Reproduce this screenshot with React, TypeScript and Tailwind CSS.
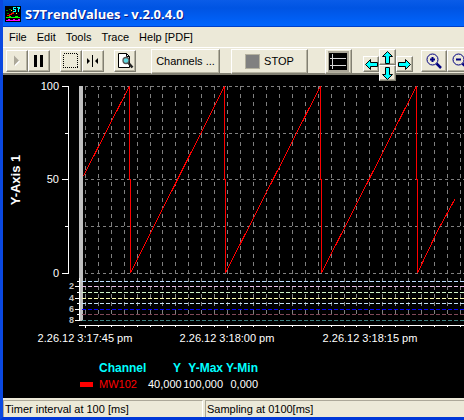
import type { ReactNode } from "react";

const MENU = ["File", "Edit", "Tools", "Trace", "Help [PDF]"];

const RAISED =
  "flex shrink-0 items-center justify-center border border-t-white border-l-white border-r-[#817f72] border-b-[#817f72] bg-[#ece9d8] shadow-[inset_-1px_-1px_0_#b5b2a0]";

function ToolButton({ label, className, children }: { label: string; className: string; children: ReactNode }) {
  return (
    <button type="button" aria-label={label} className={`${RAISED} ${className}`}>
      {children}
    </button>
  );
}

function Arrow({ turn }: { turn: number }) {
  return (
    <svg width="13" height="13" viewBox="0 0 13 13" className="shrink-0">
      <path
        d="M0.5 6.5 L5.5 1.5 V4.500 H12.500 V8.500 H5.500 V11.500 Z"
        transform={`rotate(${turn} 6.5 6.5)`}
        fill="#00ffff"
        stroke="#000"
        strokeWidth="1"
      />
    </svg>
  );
}

function Magnifier({ plus }: { plus: boolean }) {
  return (
    <svg width="18" height="18" viewBox="0 0 18 18" fill="none" stroke="#000080" className="shrink-0">
      <circle cx="7.5" cy="7.5" r="5.5" strokeWidth="1" />
      <path d="M5 7.5h5" strokeWidth="2" />
      {plus && <path d="M7.5 5v5" strokeWidth="2" />}
      <path d="M11.5 11.5l4.500 4.500" strokeWidth="2.5" />
    </svg>
  );
}

function TitleBar() {
  return (
    <header className="flex h-[27px] items-center gap-1 bg-linear-to-b from-[#0a5ce8] via-[#0054e3] via-30% to-[#0066ff] pl-[2px] shadow-[inset_0_-1px_0_#0040c8]">
      <svg width="16" height="16" viewBox="0 0 16 16" shapeRendering="crispEdges" className="shrink-0">
        <rect width="16" height="16" fill="#000" />
        <path d="M1 4h2v1H1zM4 3h2v1H4zM2 7h2v1H2zM7 6h1v2H7z" fill="#008000" />
        <path d="M2 9h2v-1h2v-1h2v-2h1v3H7v1H5v1H2z" fill="#f00" />
        <path d="M8 1h3v1H9v1h2v3H8V5h2V4H8zM12 1h3v2h-1v3h-1V2h-1z" fill="#0ff" />
        <path d="M6 4h1v1H6zM11 7h1v1h-1z" fill="#ff0" />
        <path d="M1 11h3v-1h2v1h4v-1h3v1h2v1H1z" fill="#0f0" />
        <path d="M1 14h2v-1h2v1h3v-1h2v1h3v-1h2v2H1z" fill="#f0f" />
      </svg>
      <h1 className="font-['Open_Sans','Noto_Sans',sans-serif] text-[13px] leading-4 font-bold whitespace-nowrap text-white [text-shadow:1px_1px_0_#0a1883]">
        S7TrendValues - v.2.0.4.0
      </h1>
    </header>
  );
}

function Toolbar() {
  return (
    <div className="relative z-10 flex h-[28px] shrink-0 items-start border-t border-b-2 border-t-white border-b-[#817f72] bg-[#ece9d8] pt-px">
      <div className="mt-px flex pl-[3px]">
        <ToolButton label="Start" className="size-[22px]">
          <svg width="16" height="16" viewBox="0 0 16 16">
            <path d="M6 3.5v10l5-5z" fill="#fff" />
            <path d="M5 2.5v10l5-5z" fill="#aca899" />
          </svg>
        </ToolButton>
        <ToolButton label="Pause" className="size-[22px]">
          <svg width="16" height="16" viewBox="0 0 16 16">
            <path d="M3 2h3v12H3zM9 2h3v12H9z" />
          </svg>
        </ToolButton>
      </div>
      <div className="mt-px ml-[10px] flex">
        <ToolButton label="Select area" className="size-[22px]">
          <svg width="16" height="16" viewBox="0 0 16 16" shapeRendering="crispEdges">
            <rect x="0.5" y="0.5" width="14" height="14" fill="none" stroke="#000" strokeDasharray="1 1" />
          </svg>
        </ToolButton>
        <ToolButton label="Cursor" className="size-[22px]">
          <svg width="16" height="16" viewBox="0 0 16 16">
            <path d="M7 2h1v12H7zM2 5v6l3-3zM13 5v6l-3-3z" />
          </svg>
        </ToolButton>
      </div>
      <ToolButton label="Preview" className="mt-px ml-[10px] size-[22px]">
        <svg width="18" height="18" viewBox="0 0 18 18" className="shrink-0">
          <path d="M2.5 1.5h8l3 3v11h-11z" fill="#fff" stroke="#000" />
          <path d="M10.5 1.5v3h3" fill="none" stroke="#000" />
          <circle cx="10" cy="8.5" r="3" fill="#5fd8e0" stroke="#555" strokeWidth="1.3" />
          <path d="M12.5 11l4 4.5" stroke="#222" strokeWidth="2.5" />
        </svg>
      </ToolButton>
      <button type="button" className={`${RAISED} ml-[15px] h-[25px] w-[69px] text-[11px]`}>
        Channels ...
      </button>
      <button type="button" className={`${RAISED} ml-[11px] h-[25px] w-[77px] gap-1 text-[11px]`}>
        <span className="size-[15px] border border-[#b5b2a0] bg-[#808080]" />
        STOP
      </button>
      <ToolButton label="Axis view" className="ml-[17px] h-[25px] w-[27px]">
        <svg width="21" height="21" viewBox="0 0 21 21" shapeRendering="crispEdges" className="shrink-0">
          <rect width="21" height="21" fill="#aca899" />
          <rect x="1" y="2" width="18" height="17" fill="#000" />
          <path d="M4.5 3v15M2 7.5h16M2 14.5h16" fill="none" stroke="#d8d8d8" />
        </svg>
      </ToolButton>
      <div className="ml-[11px] flex items-start">
        <ToolButton label="Move left" className="mt-[7px] size-4">
          <Arrow turn={0} />
        </ToolButton>
        <div className="flex flex-col">
          <ToolButton label="Move up" className="h-4 w-[17px]">
            <Arrow turn={90} />
          </ToolButton>
          <ToolButton label="Move down" className="h-4 w-[17px]">
            <Arrow turn={270} />
          </ToolButton>
        </div>
        <ToolButton label="Move right" className="mt-[7px] h-4 w-[17px]">
          <Arrow turn={180} />
        </ToolButton>
      </div>
      <div className="mt-px ml-2 flex h-[22px] min-w-0 flex-1 overflow-hidden">
        <ToolButton label="Zoom in" className="h-[22px] w-[26px]">
          <Magnifier plus />
        </ToolButton>
        <ToolButton label="Zoom out" className="h-[22px] w-[26px]">
          <Magnifier plus={false} />
        </ToolButton>
      </div>
    </div>
  );
}

const GRID_X = Array.from({ length: 120 }, (_, i) => Math.floor(82.4 + i * 12.93) + 0.5);
const GRID_Y = [11.5, 58.5, 104.5, 151.5, 198.5];
const CHANNELS = [
  { y: 206.5, color: "#bcdcff" },
  { y: 211.5, color: "#e8c0e8" },
  { y: 217.5, color: "#d0f4c8" },
  { y: 223.5, color: "#ffffb0" },
  { y: 228.5, color: "#c4e0f8" },
  { y: 234.5, color: "#0000ff" },
  { y: 239.5, color: "#804858" },
  { y: 245.5, color: "#408080" },
];
const DATES = [
  { x: 82, text: "2.26.12 3:17:45 pm" },
  { x: 224, text: "2.26.12 3:18:00 pm" },
  { x: 367, text: "2.26.12 3:18:15 pm" },
];
const TRACE =
  "M80.5 101 L126.5 11 V104.5 H127.5 V198 L221.5 11 V104.5 H222.5 V198 L317.5 11 V104.5 H318.5 V198 L413.5 11 V104.5 H414.5 V198 L435 155 L452 124";

function TrendChart() {
  return (
    <svg width="100%" height="282" className="block shrink-0" shapeRendering="crispEdges" role="img" aria-label="Trend of MW102">
      <g stroke="#808080" fill="none">
        {GRID_X.map((x) => (
          <line key={x} x1={x} x2={x} y1="11" y2="242" strokeDasharray="4 4" />
        ))}
        {GRID_Y.map((y) => (
          <line key={y} x1="82" x2="100%" y1={y} y2={y} strokeDasharray="3 3" />
        ))}
      </g>
      <rect x="76" y="11" width="4" height="235" fill="#c0c0c0" />
      {CHANNELS.map(({ y, color }) => (
        <line key={y} x1="79" x2="100%" y1={y} y2={y} stroke={color} strokeDasharray="4 2" />
      ))}
      <g stroke="#fff" fill="none">
        <path d="M59 11.5H65.5V198.5H59M59 104.5H65M62 58.5H65M62 151.5H65" />
        <path d="M76.5 203V246" />
        {CHANNELS.map(({ y }, i) => (
          <line key={y} x1={i % 2 ? 72 : 74} x2="77" y1={y} y2={y} />
        ))}
        <line x1="76" x2="100%" y1="250.5" y2="250.5" />
        {GRID_X.map((x, i) => (
          <line key={x} x1={x} x2={x} y1="251" y2={i % 11 ? 252 : 253} />
        ))}
      </g>
      <path d={TRACE} fill="none" stroke="#f00" />
      <g fill="#fff" fontSize="11" textAnchor="end">
        <text x="56" y="15">100</text>
        <text x="56" y="108">50</text>
        <text x="56" y="202">0</text>
      </g>
      <g fill="#c0c0c0" fontSize="9" fontWeight="bold" textAnchor="end">
        <text x="71" y="214">2</text>
        <text x="71" y="226">4</text>
        <text x="71" y="237">6</text>
        <text x="71" y="248">8</text>
      </g>
      <g fill="#fff" fontSize="11" textAnchor="middle">
        {DATES.map(({ x, text }) => (
          <text key={text} x={x} y="267">{text}</text>
        ))}
      </g>
      <text transform="translate(17 105) rotate(-90)" fill="#fff" fontSize="13" fontWeight="bold" textAnchor="middle">
        Y-Axis 1
      </text>
    </svg>
  );
}

function Legend() {
  return (
    <table className="ml-[77px] w-[178px] table-fixed border-collapse text-right text-[11px] leading-4 whitespace-nowrap text-white">
      <colgroup>
        <col className="w-[19px]" />
        <col className="w-[49px]" />
        <col className="w-[33px]" />
        <col className="w-[42px]" />
        <col className="w-[35px]" />
      </colgroup>
      <thead>
        <tr className="text-[12px] text-[#00ffff]">
          <td />
          <th scope="col" className="p-0 text-left">Channel</th>
          <th scope="col" className="p-0">Y</th>
          <th scope="col" className="p-0">Y-Max</th>
          <th scope="col" className="p-0">Y-Min</th>
        </tr>
      </thead>
      <tbody>
        <tr>
          <td className="p-0">
            <div className="h-[5px] w-[13px] bg-[#f00]" />
          </td>
          <td className="p-0 text-left text-[#f00]">MW102</td>
          <td className="p-0">40,000</td>
          <td className="p-0">100,000</td>
          <td className="p-0">0,000</td>
        </tr>
      </tbody>
    </table>
  );
}

export default function App() {
  return (
    <div className="flex min-h-screen flex-col overflow-hidden border-b-[3px] border-l-[3px] border-b-[#0038d8] border-l-[#0a48e0] bg-[#ece9d8] font-['Liberation_Sans',Arial,sans-serif] text-[11px] text-black">
      <TitleBar />
      <nav className="flex h-5 items-center gap-[10px] bg-[#ece9d8] pl-[6px]">
        {MENU.map((item) => (
          <button key={item} type="button" className="text-[11px] leading-4">
            {item}
          </button>
        ))}
      </nav>
      <Toolbar />
      <main className="flex-1 bg-black pb-1">
        <TrendChart />
        <div className="pt-[3px]">
          <Legend />
        </div>
      </main>
      <footer className="flex h-[19px] shrink-0 gap-[2px] pt-[2px] text-[11px] leading-4">
        <div className="w-[200px] border-t border-r border-l border-t-[#aca899] border-r-white border-l-[#aca899] pl-px whitespace-nowrap">
          Timer interval at 100 [ms]
        </div>
        <div className="flex-1 border-t border-l border-[#aca899] pl-px whitespace-nowrap">Sampling at 0100[ms]</div>
      </footer>
    </div>
  );
}
